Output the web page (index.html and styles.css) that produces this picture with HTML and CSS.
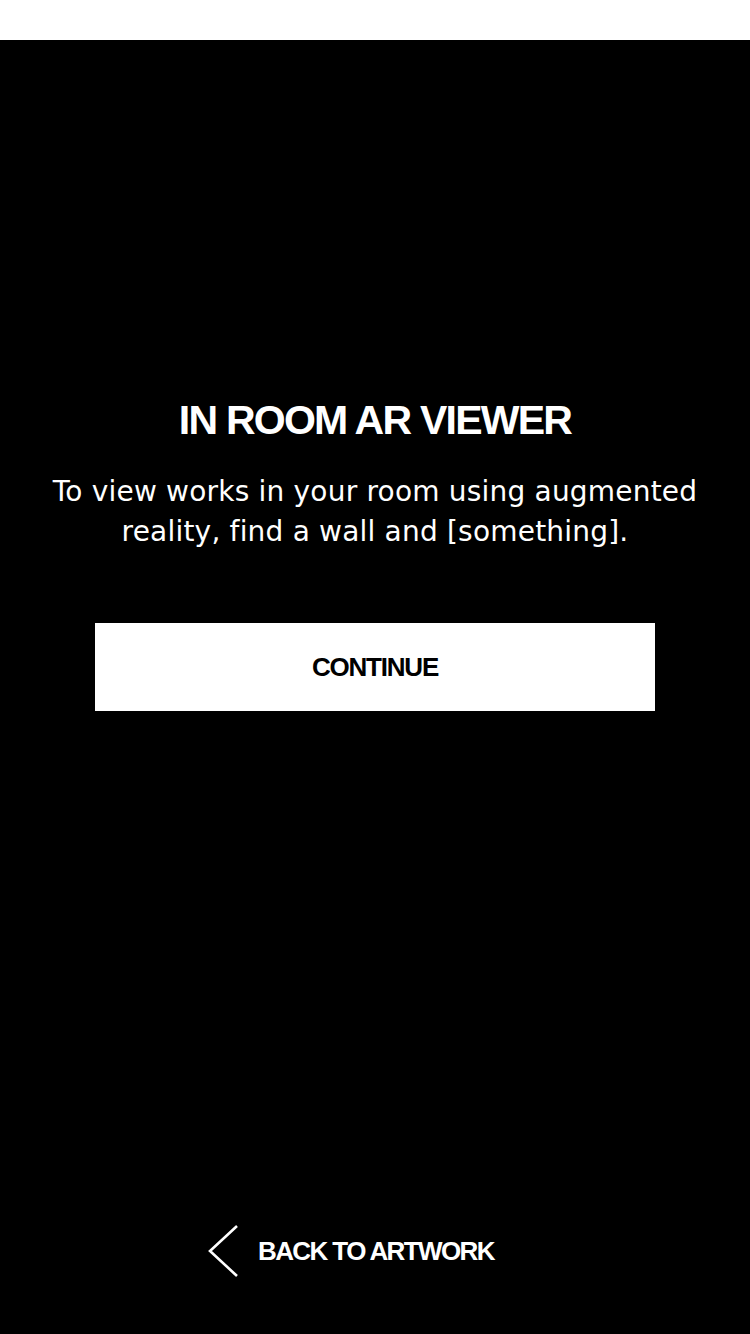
FILE: index.html
```html
<!DOCTYPE html>
<html>
<head>
<meta charset="utf-8">
<link rel="stylesheet" href="styles.css">
</head>
<body>
<div class="status"></div>
<main class="screen">
  <section class="intro">
    <h1 class="title">IN ROOM AR VIEWER</h1>
    <p class="desc">To view works in your room using augmented reality, find a wall and [something].</p>
    <button class="continue">CONTINUE</button>
  </section>
  <a class="back">
    <svg class="chev" width="32" height="54" viewBox="0 0 32 54"><polyline points="30,2 3,27 30,52" fill="none" stroke="#fff" stroke-width="2.6"/></svg>
    <span>BACK TO ARTWORK</span>
  </a>
</main>
</body>
</html>
```
FILE: styles.css
```css
html, body { margin: 0; padding: 0; }
body { width: 750px; height: 1334px; background: #000; font-family: "Liberation Sans", Arial, sans-serif; display: flex; flex-direction: column; }
.status { height: 40px; background: #fff; flex: none; }
.screen { flex: 1; background: #000; color: #fff; display: flex; flex-direction: column; align-items: center; }
.intro { display: flex; flex-direction: column; align-items: center; padding-top: 354px; flex: 1; }
.title { margin: 0; font-size: 41px; font-weight: bold; line-height: 52px; letter-spacing: -1.75px; }
.desc { margin: 26px 0 0; font-family: "DejaVu Sans", sans-serif; font-size: 28px; line-height: 40px; text-align: center; width: 700px; letter-spacing: 0.2px; }
.continue { margin-top: 71px; width: 560px; height: 88px; background: #fff; color: #000; border: none; font-family: inherit; font-size: 26px; font-weight: bold; letter-spacing: -1.2px; padding: 0; }
.back { display: flex; align-items: center; gap: 19px; color: #fff; font-size: 26px; font-weight: bold; letter-spacing: -1.6px; margin-bottom: 56px; margin-left: -49px; }
.chev { display: block; }
```
